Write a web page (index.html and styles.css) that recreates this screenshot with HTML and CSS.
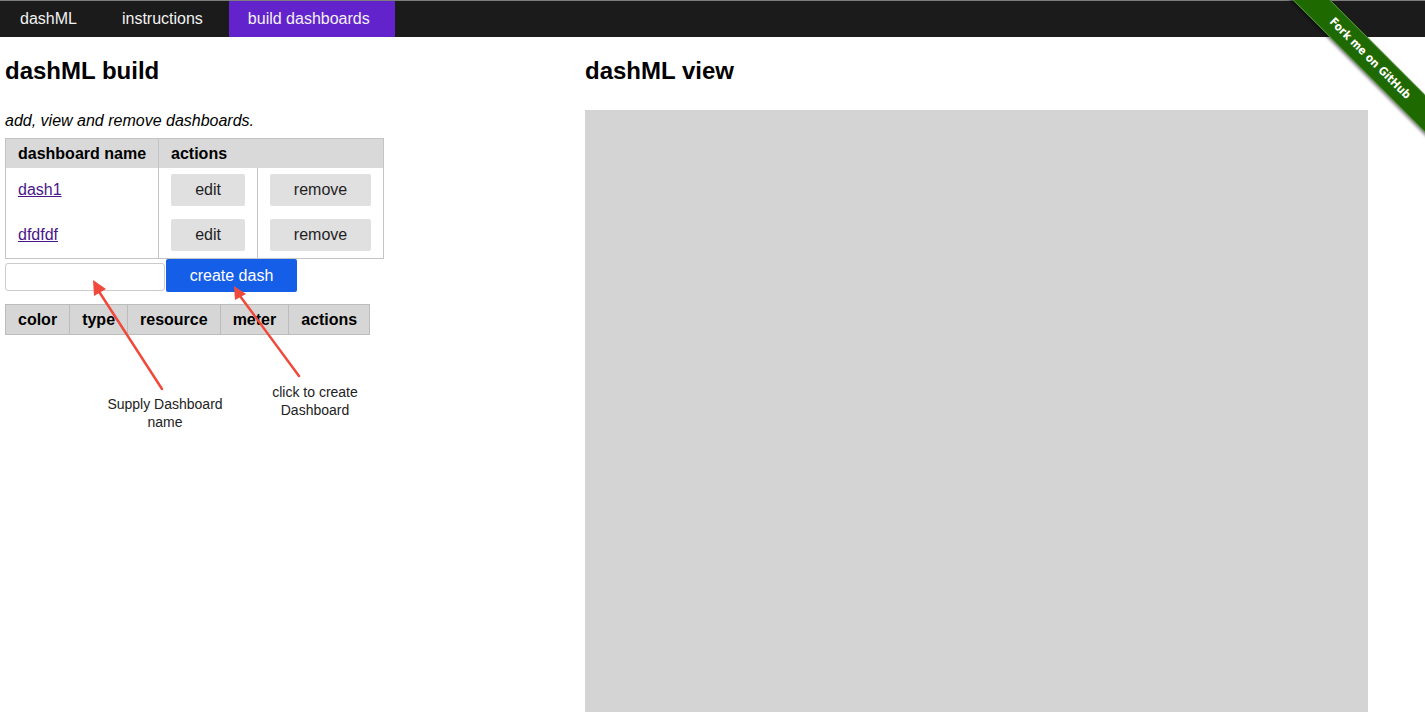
FILE: index.html
```html
<!DOCTYPE html>
<html>
<head>
<meta charset="utf-8">
<title>dashML</title>
<link rel="stylesheet" href="styles.css">
</head>
<body>
<nav class="topnav">
  <a class="nav-item">dashML</a>
  <a class="nav-item">instructions</a>
  <a class="nav-item active">build dashboards</a>
</nav>

<div class="ribbon-wrap">
  <div class="ribbon">Fork me on GitHub</div>
</div>

<main class="page">
  <section class="build">
    <h2 class="title">dashML build</h2>
    <p class="lead">add, view and remove dashboards.</p>
    <table class="dash-table">
      <thead>
        <tr><th>dashboard name</th><th colspan="2">actions</th></tr>
      </thead>
      <tbody>
        <tr>
          <td><a class="dash-link" href="#">dash1</a></td>
          <td><button class="btn btn-edit">edit</button></td>
          <td><button class="btn btn-remove">remove</button></td>
        </tr>
        <tr>
          <td><a class="dash-link" href="#">dfdfdf</a></td>
          <td><button class="btn btn-edit">edit</button></td>
          <td><button class="btn btn-remove">remove</button></td>
        </tr>
      </tbody>
    </table>
    <div class="create-row">
      <input class="name-input" type="text">
      <button class="btn-create">create dash</button>
    </div>
    <table class="meter-table">
      <thead>
        <tr><th>color</th><th>type</th><th>resource</th><th>meter</th><th>actions</th></tr>
      </thead>
    </table>

    <svg class="arrows" width="400" height="460" viewBox="0 0 400 460">
      <g stroke="#f04a3c" stroke-width="2.5" stroke-linecap="round" fill="none">
        <line x1="162" y1="389" x2="98" y2="290"/>
        <line x1="299" y1="376" x2="240" y2="296"/>
      </g>
      <g fill="#f04a3c">
        <polygon points="93,280 106,289 94,296"/>
        <polygon points="234,286 246,294 235,300"/>
      </g>
    </svg>
    <div class="note note-supply">Supply Dashboard<br>name</div>
    <div class="note note-click">click to create<br>Dashboard</div>
  </section>

  <section class="view">
    <h2 class="title">dashML view</h2>
    <div class="canvas"></div>
  </section>
</main>
</body>
</html>
```

FILE: styles.css
```css
html, body {
  margin: 0;
  padding: 0;
  background: #ffffff;
  font-family: "Liberation Sans", Arial, Helvetica, sans-serif;
  font-size: 16px;
  color: #000;
  overflow: hidden;
}

.topnav {
  display: flex;
  gap: 5px;
  height: 36px;
  background: #1b1b1b;
  border-top: 1px solid #7d7d7d;
}

.nav-item {
  display: flex;
  align-items: center;
  padding: 0 20px 0 20px;
  color: #f2f2f2;
  font-size: 16px;
  text-decoration: none;
}

.nav-item.active {
  background: #6323cc;
  margin-left: 1px;
  padding: 0 25px 0 19px;
}

.ribbon-wrap {
  position: absolute;
  top: 0;
  right: 0;
  width: 150px;
  height: 150px;
  overflow: hidden;
  z-index: 5;
}

.ribbon {
  position: absolute;
  left: -25px;
  top: 45px;
  width: 240px;
  height: 27px;
  line-height: 27px;
  transform: rotate(45deg);
  background: #1f6a00;
  color: #ffffff;
  text-align: center;
  font-family: "DejaVu Sans Condensed", "DejaVu Sans", sans-serif;
  font-stretch: condensed;
  font-weight: bold;
  font-size: 11.5px;
  box-shadow: 0 2px 3px rgba(0, 0, 0, 0.45), inset 0 1px 0 rgba(255, 255, 255, 0.25), inset 0 -1px 0 rgba(255, 255, 255, 0.25);
}

.page {
  display: flex;
  padding: 0 5px;
  position: relative;
}

.build {
  width: 580px;
  flex: none;
  position: relative;
}

.view {
  width: 783px;
  flex: none;
}

.title {
  font-size: 24px;
  font-weight: bold;
  margin: 20px 0 0 0;
  line-height: 28px;
}

.lead {
  font-style: italic;
  margin: 27px 0 0 0;
  line-height: 18px;
}

.dash-table {
  border-collapse: collapse;
  margin-top: 8px;
  border: 1px solid #c4c4c4;
}

.dash-table th {
  background: #d9d9d9;
  text-align: left;
  font-weight: bold;
  height: 29px;
  padding: 0 12px;
  border: 1px solid #c4c4c4;
  border-bottom: none;
}

.dash-table td {
  padding: 6px 12px 7px 12px;
  height: 32px;
  border-left: 1px solid #c4c4c4;
  border-right: 1px solid #c4c4c4;
  vertical-align: middle;
}

.dash-link {
  color: #4a1689;
  text-decoration: underline;
}

.btn {
  display: block;
  height: 32px;
  border: none;
  border-radius: 2px;
  background: #e0e0e0;
  color: #1f1f1f;
  font-family: "Liberation Sans", Arial, sans-serif;
  font-size: 16px;
  padding: 0;
}

.btn-edit {
  width: 74px;
}

.btn-remove {
  width: 101px;
}

.create-row {
  display: flex;
  align-items: flex-start;
  gap: 1px;
  margin-top: 0;
}

.name-input {
  box-sizing: border-box;
  width: 160px;
  height: 28px;
  margin: 4px 0 0 0;
  border: 1px solid #cccccc;
  border-radius: 3px;
  padding: 0 6px;
  background: #fff;
}

.btn-create {
  width: 131px;
  height: 33px;
  border: none;
  border-radius: 2px;
  background: #155ee8;
  color: #ffffff;
  font-family: "Liberation Sans", Arial, sans-serif;
  font-size: 16px;
  padding: 0;
  margin: 0;
}

.meter-table {
  border-collapse: collapse;
  margin-top: 12px;
}

.meter-table th {
  background: #d6d6d6;
  border: 1px solid #bcbcbc;
  height: 29px;
  padding: 0 12px;
  font-weight: bold;
  text-align: left;
}

.arrows {
  position: absolute;
  left: -5px;
  top: -37px;
  pointer-events: none;
}

.note {
  position: absolute;
  font-size: 14px;
  line-height: 18px;
  color: #222222;
  text-align: center;
  white-space: nowrap;
}

.note-supply {
  left: 95px;
  top: 358px;
  width: 130px;
}

.note-click {
  left: 250px;
  top: 346px;
  width: 120px;
}

.canvas {
  margin-top: 25px;
  height: 620px;
  background: #d4d4d4;
}
```
